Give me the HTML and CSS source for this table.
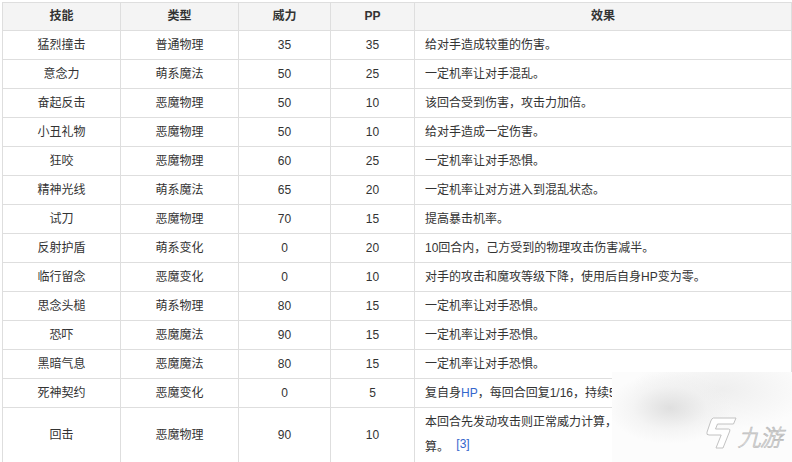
FILE: index.html
```html
<!DOCTYPE html>
<html lang="zh-CN">
<head>
<meta charset="utf-8">
<title>技能表</title>
<link rel="stylesheet" href="styles.css">
</head>
<body>
<table class="skills">
  <colgroup>
    <col class="c-name"><col class="c-type"><col class="c-pow"><col class="c-pp"><col class="c-eff">
  </colgroup>
  <thead>
    <tr><th>技能</th><th>类型</th><th>威力</th><th>PP</th><th>效果</th></tr>
  </thead>
  <tbody>
    <tr><td>猛烈撞击</td><td>普通物理</td><td>35</td><td>35</td><td class="eff">给对手造成较重的伤害。</td></tr>
    <tr><td>意念力</td><td>萌系魔法</td><td>50</td><td>25</td><td class="eff">一定机率让对手混乱。</td></tr>
    <tr><td>奋起反击</td><td>恶魔物理</td><td>50</td><td>10</td><td class="eff">该回合受到伤害，攻击力加倍。</td></tr>
    <tr><td>小丑礼物</td><td>恶魔物理</td><td>50</td><td>10</td><td class="eff">给对手造成一定伤害。</td></tr>
    <tr><td>狂咬</td><td>恶魔物理</td><td>60</td><td>25</td><td class="eff">一定机率让对手恐惧。</td></tr>
    <tr><td>精神光线</td><td>萌系魔法</td><td>65</td><td>20</td><td class="eff">一定机率让对方进入到混乱状态。</td></tr>
    <tr><td>试刀</td><td>恶魔物理</td><td>70</td><td>15</td><td class="eff">提高暴击机率。</td></tr>
    <tr><td>反射护盾</td><td>萌系变化</td><td>0</td><td>20</td><td class="eff">10回合内，己方受到的物理攻击伤害减半。</td></tr>
    <tr><td>临行留念</td><td>恶魔变化</td><td>0</td><td>10</td><td class="eff">对手的攻击和魔攻等级下降，使用后自身HP变为零。</td></tr>
    <tr><td>思念头槌</td><td>萌系物理</td><td>80</td><td>15</td><td class="eff">一定机率让对手恐惧。</td></tr>
    <tr><td>恐吓</td><td>恶魔魔法</td><td>90</td><td>15</td><td class="eff">一定机率让对手恐惧。</td></tr>
    <tr><td>黑暗气息</td><td>恶魔魔法</td><td>80</td><td>15</td><td class="eff">一定机率让对手恐惧。</td></tr>
    <tr><td>死神契约</td><td>恶魔变化</td><td>0</td><td>5</td><td class="eff">复自身<a class="link">HP</a>，每回合回复1/16，持续5回合。</td></tr>
    <tr class="tall"><td>回击</td><td>恶魔物理</td><td>90</td><td>10</td><td class="eff">本回合先发动攻击则正常威力计算，后发动攻击则威力加倍计<br>算。 <a class="ref">[3]</a></td></tr>
  </tbody>
</table>

<div class="watermark">
  <div class="wm-logo">
    <svg class="wm-mark" width="34" height="32" viewBox="0 0 34 32">
      <path d="M10.5 1 H33 L30.5 7 H14.5 L12.5 12 H25.5 Q27.5 12 26.8 14 L20 31 H13 L18.2 18 H6 Q3 18 4 15.2 L7.8 4 Q9 1 10.5 1 Z" fill="#ffffff" stroke="#c2c2c2" stroke-width="1" stroke-linejoin="round"/>
    </svg>
    <span class="wm-text">九游</span>
  </div>
</div>
</body>
</html>
```

FILE: styles.css
```css
html, body {
  margin: 0;
  padding: 0;
  background: #ffffff;
}

body {
  padding: 2px 0 0 2px;
  font-family: "Liberation Sans", "Noto Sans CJK SC", sans-serif;
  font-size: 12px;
  color: #333333;
}

.skills {
  border-collapse: collapse;
  table-layout: fixed;
  width: 789px;
}

.c-name { width: 118px; }
.c-type { width: 118px; }
.c-pow  { width: 92px; }
.c-pp   { width: 84px; }
.c-eff  { width: 377px; }

.skills th,
.skills td {
  border: 1px solid #dedede;
  text-align: center;
  line-height: 22px;
  padding: 3px 10px;
  font-weight: normal;
}

.skills th {
  background: #f4f4f4;
  font-weight: bold;
  padding: 2px 10px 3px;
}

.skills td.eff {
  text-align: left;
}

.skills tr.tall td {
  padding-bottom: 4px;
}

.link {
  color: #3366cc;
}

.ref {
  color: #3366cc;
  margin-left: 4px;
  vertical-align: 3px;
}

.watermark {
  position: absolute;
  left: 612px;
  top: 372px;
  width: 180px;
  height: 90px;
  background:
    radial-gradient(ellipse 62px 36px at 58px 36px, rgba(222,222,222,0.95), rgba(238,238,238,0.55) 60%, rgba(255,255,255,0) 100%),
    radial-gradient(ellipse 90px 40px at 110px 18px, rgba(236,236,236,0.85), rgba(255,255,255,0) 100%),
    #fcfcfc;
  display: flex;
  align-items: flex-end;
  justify-content: flex-end;
}

.wm-logo {
  display: flex;
  align-items: flex-end;
  gap: 3px;
  padding: 0 8px 13px 0;
}

.wm-mark {
  display: block;
}

.wm-text {
  font-family: "Noto Sans CJK SC", sans-serif;
  font-size: 23px;
  line-height: 25px;
  font-weight: 300;
  color: #ffffff;
  -webkit-text-stroke: 0.8px #bdbdbd;
  letter-spacing: -1px;
  transform: skewX(-14deg);
  display: inline-block;
}
```
